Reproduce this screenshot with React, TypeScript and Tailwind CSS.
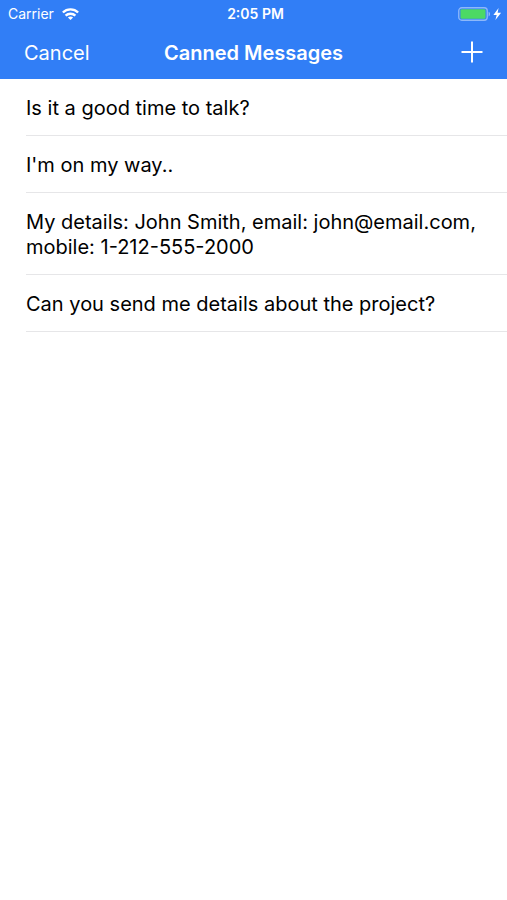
import React from "react";

const MESSAGES = [
  "Is it a good time to talk?",
  "I'm on my way..",
  "My details: John Smith, email: john@email.com, mobile: 1-212-555-2000",
  "Can you send me details about the project?",
];

function WifiIcon() {
  return (
    <svg viewBox="0 0 17 12" className="h-[12px] w-[17px]" aria-hidden="true">
      <g fill="none" stroke="currentColor" strokeWidth="2.4">
        <path d="M0.9 4.5a10.8 10.8 0 0 1 15.2 0" />
        <path d="M3.6 7.7a7 7 0 0 1 9.8 0" />
      </g>
      <path d="M8.5 12 5.9 9.6a4 4 0 0 1 5.2 0z" fill="currentColor" />
    </svg>
  );
}

function BatteryIcon() {
  return (
    <svg viewBox="0 0 45 14" className="h-[14px] w-[45px]" aria-hidden="true">
      <rect x="0.75" y="0.75" width="28.5" height="12.5" rx="3" fill="none" stroke="#fff" strokeOpacity="0.45" strokeWidth="1.3" />
      <rect x="2.5" y="2.2" width="25" height="9.6" rx="1.2" fill="#4cd964" />
      <path d="M30.6 4.7c1.8.7 1.8 4 0 4.7z" fill="#fff" fillOpacity="0.5" />
      <path d="M40.6 1 35.4 7.9h3.3L37.4 13l5.7-7.2h-3.5z" fill="#fff" />
    </svg>
  );
}

function StatusBar() {
  return (
    <div className="grid h-[27px] grid-cols-3 items-center pr-1 pl-2 text-sm">
      <div className="flex items-center gap-2">
        <span>Carrier</span>
        <WifiIcon />
      </div>
      <div className="text-center font-semibold">2:05 PM</div>
      <div className="flex justify-end">
        <BatteryIcon />
      </div>
    </div>
  );
}

function NavBar() {
  return (
    <nav className="grid h-[52px] grid-cols-[1fr_auto_1fr] items-center px-6 text-xl">
      <button type="button" className="justify-self-start">
        Cancel
      </button>
      <h1 className="font-semibold">Canned Messages</h1>
      <button type="button" aria-label="Add message" className="justify-self-end">
        <svg viewBox="0 0 22 24" className="h-[24px] w-[22px]" aria-hidden="true">
          <path d="M11 0.5v21M0.5 11h21" stroke="currentColor" strokeWidth="2" />
        </svg>
      </button>
    </nav>
  );
}

export default function App() {
  return (
    <div className="min-h-screen bg-white font-['Inter',sans-serif] text-black">
      <header className="bg-[#317ef6] text-white">
        <StatusBar />
        <NavBar />
      </header>
      <ul className="pl-[26px]">
        {MESSAGES.map((message) => (
          <li
            key={message}
            className="border-b border-[#e6e6e8] pt-[17px] pr-6 pb-[14px] text-xl leading-[25px]"
          >
            {message}
          </li>
        ))}
      </ul>
    </div>
  );
}
